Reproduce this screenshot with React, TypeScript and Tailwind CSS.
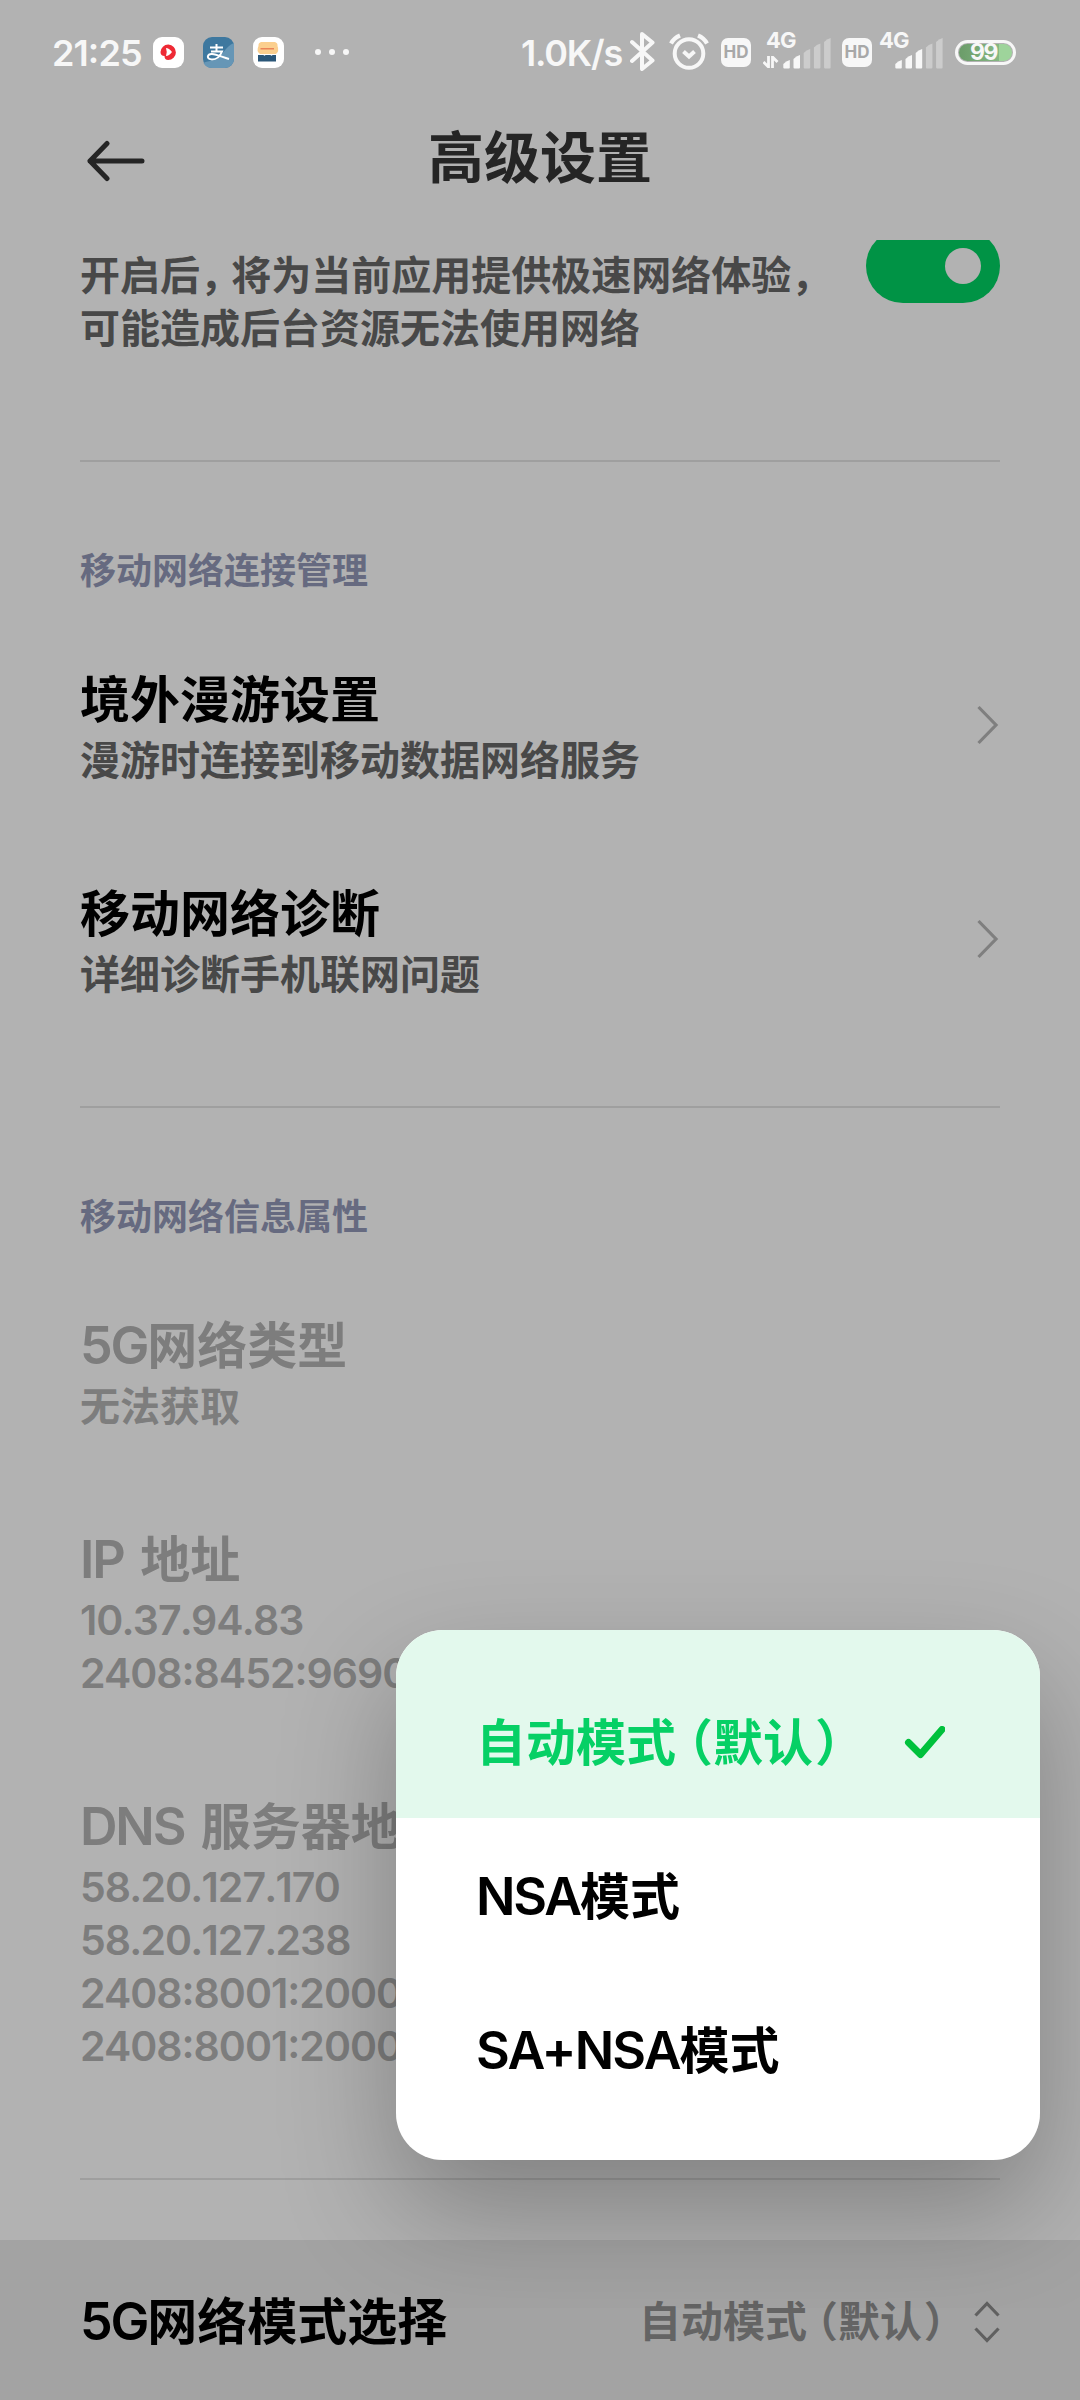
import React from "react";

const FONT = "font-['Inter','Noto_Sans_CJK_SC',sans-serif]";

/* Splits a label so that Latin runs, colons and full-width punctuation get their own metrics. */
function Label({ text, latin = "" }: { text: string; latin?: string }) {
  const parts = text.split(/([（），:.]|[A-Za-z0-9+]+)/).filter(Boolean);
  return (
    <>
      {parts.map((p, i) => {
        if (p === "（") return <span key={i} className="ml-[0.24em] [font-feature-settings:'halt']">{p}</span>;
        if (p === "）") return <span key={i} className="ml-[0.04em] [font-feature-settings:'halt']">{p}</span>;
        if (p === "，") return <span key={i} className="mr-[0.28em] [font-feature-settings:'halt']">{p}</span>;
        if (p === ":") return <span key={i} className={"relative -top-[0.07em] " + latin}>{p}</span>;
        if (p === ".") return <span key={i} className={"mx-[-0.02em] " + latin}>{p}</span>;
        if (/^[A-Za-z0-9+]/.test(p)) return <span key={i} className={latin}>{p}</span>;
        return <React.Fragment key={i}>{p}</React.Fragment>;
      })}
    </>
  );
}

function Bars({ on }: { on: number }) {
  const tops = [22, 17, 11, 5.5, 0];
  return (
    <svg width="49" height="31" viewBox="0 0 49 31" className="block">
      {tops.map((t, i) => (
        <path key={i} d={`M${i * 10.2 + 0.3} 29.5V${t + 4}Q${i * 10.2 + 3} ${t + 1} ${i * 10.2 + 6.8} ${t}V29.5Q${i * 10.2 + 6.8} 30.5 ${i * 10.2 + 5.8} 30.5H${i * 10.2 + 1.3}Q${i * 10.2 + 0.3} 30.5 ${i * 10.2 + 0.3} 29.5Z`}
          fill={i < on ? "#f7f7f7" : "#cccccc"} />
      ))}
    </svg>
  );
}

function HD({ className }: { className: string }) {
  return (
    <div className={"flex h-[29px] w-[30px] shrink-0 items-center justify-center rounded-[7px] bg-[#f7f7f7] text-[17px] leading-none font-bold text-[#a8a8a8] " + className}>
      HD
    </div>
  );
}

function StatusBar() {
  return (
    <div className="flex h-[104px] w-full items-start text-[#f7f7f7]">
      <div className="ml-[52px] mt-[34px] w-[101px] text-[36px] leading-[38px] font-semibold whitespace-nowrap"><Label text="21:25" latin="tracking-[-0.9px]" /></div>
      <svg className="mt-[37px] shrink-0" width="31" height="31" viewBox="0 0 31 31">
        <rect width="31" height="31" rx="9" fill="#fff" />
        <path d="M7.500 15a7.700 7.700 0 1 1 7.700 8c-2.500 0-3.700-1.500-3.700-4-2.500 0-4-1.500-4-4z" fill="#ee2a35" />
        <path d="M13 11q3 0 6 4-3 4-6 4 1.500-4 0-8z" fill="#fff" />
      </svg>
      <svg className="ml-[19px] mt-[37px] shrink-0" width="31" height="31" viewBox="0 0 31 31">
        <rect width="31" height="31" rx="9" fill="#3e789f" />
        <path d="M31 6C22 9 19 21 10 23.500 6 24.500 3 24 0.500 26Q3 31 9 31H22a9 9 0 0 0 9-9z" fill="#6696b6" />
        <path d="M7 10.500h13M13.500 7v7.500M8 14.500H19c-2 5-6 8-10 8-6 0-5-6 0-5.500 5 .5 10 3 17 5" fill="none" stroke="#fff" strokeWidth="2" />
      </svg>
      <svg className="ml-[19px] mt-[37px] shrink-0" width="31" height="31" viewBox="0 0 31 31">
        <rect width="31" height="31" rx="9" fill="#fff" />
        <path d="M8 5h14q3 1 2.500 4 2 5-1.500 8H7q-4-3-1.500-8Q5 6 8 5z" fill="#fbcf8e" />
        <path d="M7.500 11.800h13.500" stroke="#e8704a" strokeWidth="1.200" />
        <path d="M5 18h5.500q1 1.500 2 0h5q1 1.500 2 0H23v6.500H5z" fill="#2a5678" />
      </svg>
      <svg className="ml-[31px] mt-[49px] shrink-0" width="34" height="6" viewBox="0 0 34 6">
        <circle cx="3" cy="3" r="3" fill="#f7f7f7" /><circle cx="17" cy="3" r="3" fill="#f7f7f7" /><circle cx="31" cy="3" r="3" fill="#f7f7f7" />
      </svg>
      <div className="ml-[172px] mt-[34px] w-[109px] text-[36px] leading-[38px] font-semibold tracking-[-1.200px] whitespace-nowrap">1.0K/s</div>
      <svg className="mt-[32px] shrink-0" width="25" height="39" viewBox="0 0 25 39">
        <path d="M2 10 22.500 28.500 12 37V2l10.500 8.500L2 29" fill="none" stroke="#f7f7f7" strokeWidth="4" strokeLinejoin="round" strokeLinecap="round" />
      </svg>
      <svg className="ml-[14px] mt-[33px] shrink-0" width="40" height="38" viewBox="0 0 40 38">
        <circle cx="20" cy="20.500" r="14.300" fill="none" stroke="#f7f7f7" strokeWidth="4" />
        <path d="m14.500 18.500 5.500 5 5.500-5" fill="none" stroke="#f7f7f7" strokeWidth="4" />
        <path d="M2 10.500Q5 5 11 2.500M38 10.500Q35 5 29 2.500" fill="none" stroke="#f7f7f7" strokeWidth="4.200" />
      </svg>
      <HD className="ml-[12px] mt-[38px]" />
      <div className="relative ml-[12px] mt-[32px] h-[37px] w-[68px]">
        <div className="ml-[3px] text-[22px] leading-[17px] font-bold tracking-[-1px]">4G</div>
        <svg className="absolute left-0 top-[24px]" width="16" height="12" viewBox="0 0 16 12"><path d="M5.500 0v11L0.500 6M9.500 12V1l5 5" fill="none" stroke="#f7f7f7" strokeWidth="2.800" /></svg>
        <div className="absolute left-[20px] top-[5.500px]"><Bars on={2} /></div>
      </div>
      <HD className="ml-[11px] mt-[38px]" />
      <div className="relative ml-[7px] mt-[32px] h-[37px] w-[64px]">
        <div className="text-[22px] leading-[17px] font-bold tracking-[-1px]">4G</div>
        <div className="absolute left-[16px] top-[5.500px]"><Bars on={3} /></div>
      </div>
      <div className="ml-[12px] mt-[40px] flex h-[25px] w-[61px] shrink-0 items-center justify-center rounded-full border-[3px] border-[#f7f7f7]">
        <div className="flex h-[17px] w-[53px] items-center justify-center rounded-full bg-[linear-gradient(90deg,#6b9c69_0%,#85b783_75%,#9ed49b_76%)] pr-[4px] text-[23px] leading-none font-bold tracking-[-1.500px]">99</div>
      </div>
    </div>
  );
}

function Chevron() {
  return (
    <svg width="22" height="40" viewBox="0 0 22 40" className="mt-[37px] mr-[1px] shrink-0">
      <path d="M1.500 2 19 20 1.500 38" fill="none" stroke="#7f7f7f" strokeWidth="3.200" />
    </svg>
  );
}

const SUB = "text-[40px] leading-[53px]";
const SUB_LATIN = "text-[41px] tracking-[-1px]";
const TITLE_LATIN = "text-[52px] tracking-[-2.200px]";

function Item({ title, lines, className, arrow }: { title: string; lines: string[]; className: string; arrow?: boolean }) {
  return (
    <div className={"flex justify-between whitespace-nowrap " + className}>
      <div className="font-semibold">
        <div className={"h-[66px] text-[50px] leading-[64px] [word-spacing:4px] " + (arrow ? "text-black" : "")}><Label text={title} latin={TITLE_LATIN} /></div>
        {lines.map((l, i) => <div key={i} className={"h-[53px] " + SUB}><Label text={l} latin={SUB_LATIN} /></div>)}
      </div>
      {arrow && <Chevron />}
    </div>
  );
}

function Section({ children }: { children: React.ReactNode }) {
  return <div className="mt-[85px] h-[48px] text-[36px] leading-[48px] font-semibold text-[#666a80]">{children}</div>;
}

function Menu() {
  const row = "flex h-[154px] items-center pt-[3px] pl-[80px] text-[50px] leading-[64px] font-semibold whitespace-nowrap";
  return (
    <div className="absolute left-[396px] top-[1630px] h-[530px] w-[644px] overflow-hidden rounded-[47px] bg-white text-black">
      <div className="bg-[#e3f9ed] pt-[34px]">
        <div className={row + " text-[#06d065]"}>
          <div className="w-[427px]"><Label text="自动模式（默认）" /></div>
          <svg width="42" height="34" viewBox="0 0 42 34"><path d="M5.500 16.500 17.500 28.500 39 3.500" fill="none" stroke="#00c13c" strokeWidth="7" strokeLinecap="round" strokeLinejoin="round" /></svg>
        </div>
      </div>
      <div className={row}><div><Label text="NSA模式" latin={TITLE_LATIN} /></div></div>
      <div className={row}><div><Label text="SA+NSA模式" latin="text-[52px] tracking-[-1.900px]" /></div></div>
    </div>
  );
}

export default function App() {
  return (
    <div className={"relative flex h-[2400px] w-[1080px] flex-col overflow-hidden bg-[#b2b2b2] " + FONT}>
      <StatusBar />
      <header className="relative flex h-[136px] items-start justify-center">
        <svg className="absolute left-[86px] top-[35.500px]" width="60" height="42" viewBox="0 0 60 42">
          <path d="M21 3.500 4 21l17 17.500M4 21H56" fill="none" stroke="#252525" strokeWidth="5" strokeLinecap="round" strokeLinejoin="round" />
        </svg>
        <h1 className="mt-[19px] text-[56px] leading-[70px] font-semibold text-[#252525]">高级设置</h1>
      </header>
      <main className="flex grow flex-col px-[80px] text-[#7d7d7d]">
        <div className="flex h-[220px] justify-between">
          <div className={"mt-[9px] font-semibold whitespace-nowrap text-[#484848] " + SUB}>
            <div><Label text="开启后，将为当前应用提供极速网络体验，" /></div>
            <div>可能造成后台资源无法使用网络</div>
          </div>
          <div className="-ml-[20px] h-[63px] w-[134px] shrink-0 overflow-hidden">
            <div className="-mt-[11px] flex h-[74px] items-center justify-end rounded-full bg-[#009345] pr-[19px]">
              <div className="size-[36px] rounded-full bg-[#b2b2b2]" />
            </div>
          </div>
        </div>
        <div className="h-[2px] bg-[#9f9f9f]" />
        <Section>移动网络连接管理</Section>
        <Item className="mt-[73px] h-[214px] text-[#484848]" title="境外漫游设置" lines={["漫游时连接到移动数据网络服务"]} arrow />
        <Item className="h-[224px] text-[#484848]" title="移动网络诊断" lines={["详细诊断手机联网问题"]} arrow />
        <div className="h-[2px] shrink-0 bg-[#9f9f9f]" />
        <Section>移动网络信息属性</Section>
        <Item className="mt-[73px] h-[214px]" title="5G网络类型" lines={["无法获取"]} />
        <Item className="h-[267px]" title="IP 地址" lines={["10.37.94.83", "2408:8452:9690"]} />
        <Item className="h-[383px]" title="DNS 服务器地址" lines={["58.20.127.170", "58.20.127.238", "2408:8001:2000", "2408:8001:2000"]} />
        <div className="h-[2px] shrink-0 bg-[#9f9f9f]" />
      </main>
      <footer className="flex h-[160px] shrink-0 items-center justify-between bg-[#a3a3a3] px-[80px] pt-[3px] whitespace-nowrap">
        <div className="text-[50px] leading-[64px] font-semibold text-black"><Label text="5G网络模式选择" latin={TITLE_LATIN} /></div>
        <div className="flex items-center text-[42px] leading-[56px] font-semibold text-[#646464]">
          <div className="w-[335px]"><Label text="自动模式（默认）" /></div>
          <svg width="26" height="42" viewBox="0 0 26 42"><path d="M1.500 14.500 13 2.500l11.500 12M1.500 27.500 13 39.500l11.500-12" fill="none" stroke="#606060" strokeWidth="3.200" /></svg>
        </div>
      </footer>
      {/* The popup's shadow is cut off at the lower edge of its window. */}
      <div className="absolute top-[1500px] left-0 h-[808px] w-full overflow-hidden">
        <div className="mt-[130px] ml-[396px] h-[530px] w-[644px] rounded-[47px] shadow-[0_50px_115px_rgba(0,0,0,0.28)]" />
      </div>
      <Menu />
    </div>
  );
}
